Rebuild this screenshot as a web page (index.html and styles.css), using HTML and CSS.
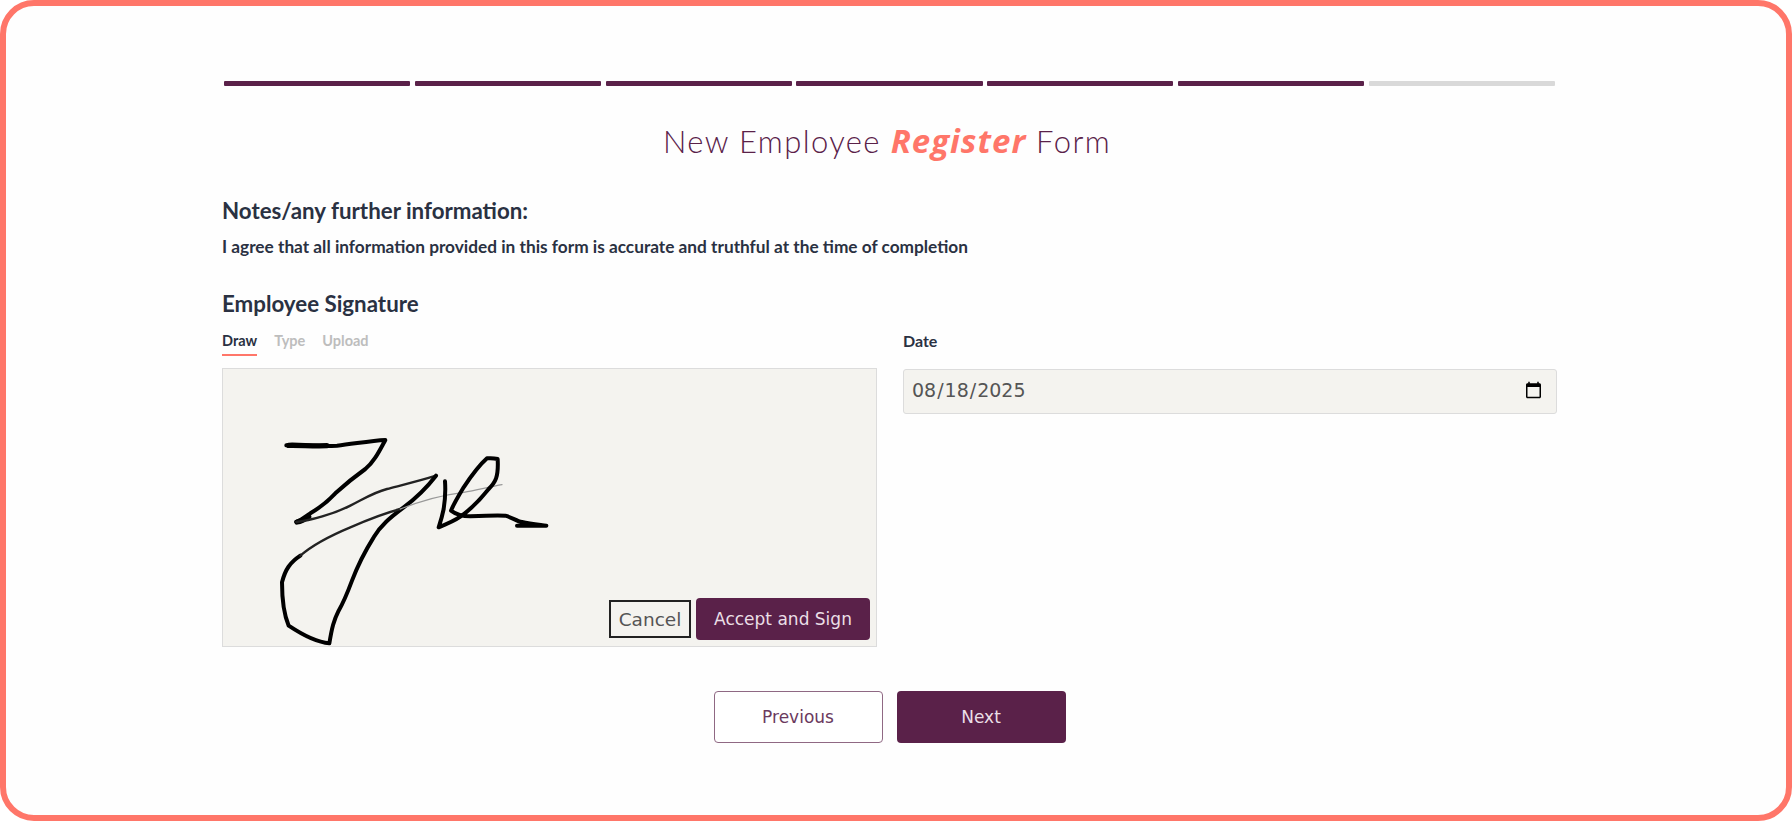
FILE: index.html
```html
<!DOCTYPE html>
<html lang="en">
<head>
<meta charset="utf-8">
<title>New Employee Register Form</title>
<link rel="stylesheet" href="styles.css">
</head>
<body>
<div class="frame">
  <main class="form">
    <div class="progress">
      <span class="step done"></span><span class="step done"></span><span class="step done"></span><span class="step done"></span><span class="step done"></span><span class="step done"></span><span class="step"></span>
    </div>
    <h1 class="title">New Employee <em class="accent">Register</em> Form</h1>
    <h2 class="heading notes">Notes/any further information:</h2>
    <p class="agree">I agree that all information provided in this form is accurate and truthful at the time of completion</p>
    <h2 class="heading sig-heading">Employee Signature</h2>
    <div class="columns">
      <section class="col">
        <div class="tabs">
          <span class="tab active">Draw</span>
          <span class="tab">Type</span>
          <span class="tab">Upload</span>
        </div>
        <div class="pad">
          <svg class="ink" viewBox="38 25 1962 834" preserveAspectRatio="xMinYMin meet" aria-hidden="true">
            <path class="s" d="M228 254C270 252 320 258 380 255C430 250 480 240 525 238C505 275 490 305 465 325C430 350 400 375 375 398C350 425 330 440 300 458C285 468 270 480 258 484"/>
            <path class="x" d="M235 254C270 253 310 257 350 255"/>
            <path class="x" d="M260 484C270 482 280 478 295 468"/>
            <path class="m" d="M258 484C300 480 370 460 420 435C460 415 490 395 530 385C580 372 630 360 677 345"/>
            <path class="s" d="M677 345C650 380 620 410 580 440C540 470 510 495 490 530C465 570 440 620 425 660C410 700 400 725 385 750C370 780 365 800 357 848C320 845 280 825 235 795C220 760 215 720 215 665C225 625 240 605 270 585"/>
            <path class="m" d="M270 585C310 550 360 525 420 500C470 478 520 458 570 445"/>
            <path class="t" d="M570 445C620 425 680 405 760 395C800 388 840 378 875 372"/>
            <path class="s" d="M704 362C706 390 704 420 700 445C696 465 690 485 685 500C710 490 730 482 750 468C790 440 815 410 835 385C855 365 865 350 862 295C850 292 840 292 830 293C805 315 780 350 760 380C745 405 730 430 722 450C735 460 750 467 780 467C820 465 860 463 885 465C905 470 920 482 935 484C960 490 985 492 1008 495L920 495"/>
          </svg>
          <div class="pad-actions">
            <button class="btn cancel" type="button">Cancel</button>
            <button class="btn accept" type="button">Accept and Sign</button>
          </div>
        </div>
      </section>
      <section class="col">
        <label class="date-label" for="date">Date</label>
        <input class="date" id="date" type="date" value="2025-08-18">
      </section>
    </div>
    <div class="nav">
      <button class="btn-nav prev" type="button">Previous</button>
      <button class="btn-nav next" type="button">Next</button>
    </div>
  </main>
</div>
</body>
</html>
```

FILE: styles.css
```css
* { box-sizing: border-box; }
html, body { margin: 0; height: 821px; background: #fff; overflow: hidden; }
.frame {
  height: 821px;
  border: 6px solid #ff7669;
  border-radius: 34px;
  background: #fefefe;
  padding: 75px 229px 0 216px;
  font-family: "Lato", sans-serif;
  color: #2a3142;
}
.form { width: 1335px; }
.progress { display: flex; gap: 4.5px; height: 5px; padding: 0 2px; }
.step { flex: 1; background: #d9d9d9; border-radius: 1px; }
.step.done { background: #5a2149; }
.title {
  margin: 37px 0 0;
  height: 36px;
  line-height: 36px;
  text-align: center;
  font-size: 31px;
  font-weight: 300;
  letter-spacing: 1.4px;
  color: #5a2149;
  padding-right: 5px;
}
.accent { font-style: italic; font-weight: 700; color: #ff7669; font-family: "Open Sans", sans-serif; font-size: 33px; letter-spacing: 1px; }
.heading { margin: 0; font-size: 22.3px; line-height: 26px; font-weight: 700; color: #2a3142; }
.notes { margin-top: 39px; }
.agree { margin: 13px 0 0; font-size: 17.25px; line-height: 20px; font-weight: 700; color: #2a3142; }
.sig-heading { margin-top: 34px; }
.columns { display: grid; grid-template-columns: 655px 654px; column-gap: 26px; margin-top: 15px; }
.tabs { display: flex; gap: 17px; height: 36px; }
.tab { font-size: 14.5px; line-height: 18px; font-weight: 700; color: #bdbdbd; height: 24px; }
.tab.active { color: #2a3142; border-bottom: 2px solid #ff7669; }
.pad {
  position: relative;
  height: 279px;
  background: #f4f3ef;
  border: 1px solid #dcdcdc;
}
.ink { position: absolute; left: 0; top: 0; width: 654px; height: 278px; }
.ink path { fill: none; stroke: #000; stroke-linecap: round; stroke-linejoin: round; }
.ink .s { stroke-width: 12; }
.ink .x { stroke-width: 16; }
.ink .m { stroke-width: 7; stroke: #222; }
.ink .t { stroke-width: 4; stroke: #999; }
.pad-actions { position: absolute; right: 6px; bottom: 6px; display: flex; align-items: center; gap: 5px; }
.btn { font-family: "DejaVu Sans", sans-serif; cursor: pointer; }
.cancel { width: 82px; height: 38px; background: #f4f3ef; color: #555; border: 2px solid #222; padding: 0; font-size: 18.5px; }
.accept { width: 174px; height: 42px; background: #5a2149; color: #eadfe6; border: 0; border-radius: 4px; padding: 0; font-size: 17px; }
.date-label { display: block; height: 37px; font-size: 16px; line-height: 18px; font-weight: 700; color: #2a3142; }
.date {
  display: block;
  width: 100%;
  height: 45px;
  background: #f4f3ef;
  border: 1px solid #dcdcdc;
  border-radius: 3px;
  padding: 0 11px 3px 7px;
  font-family: "DejaVu Sans", sans-serif;
  font-size: 19px;
  color: #555;
}
.nav { display: flex; justify-content: center; gap: 14px; margin-top: 44px; }
.btn-nav { width: 169px; height: 52px; border-radius: 4px; font-family: "DejaVu Sans", sans-serif; font-size: 17px; padding: 0; cursor: pointer; }
.prev { background: #fff; color: #6b3a5e; border: 1px solid #8f6883; }
.next { background: #5a2149; color: #eadfe6; border: 0; }
```
